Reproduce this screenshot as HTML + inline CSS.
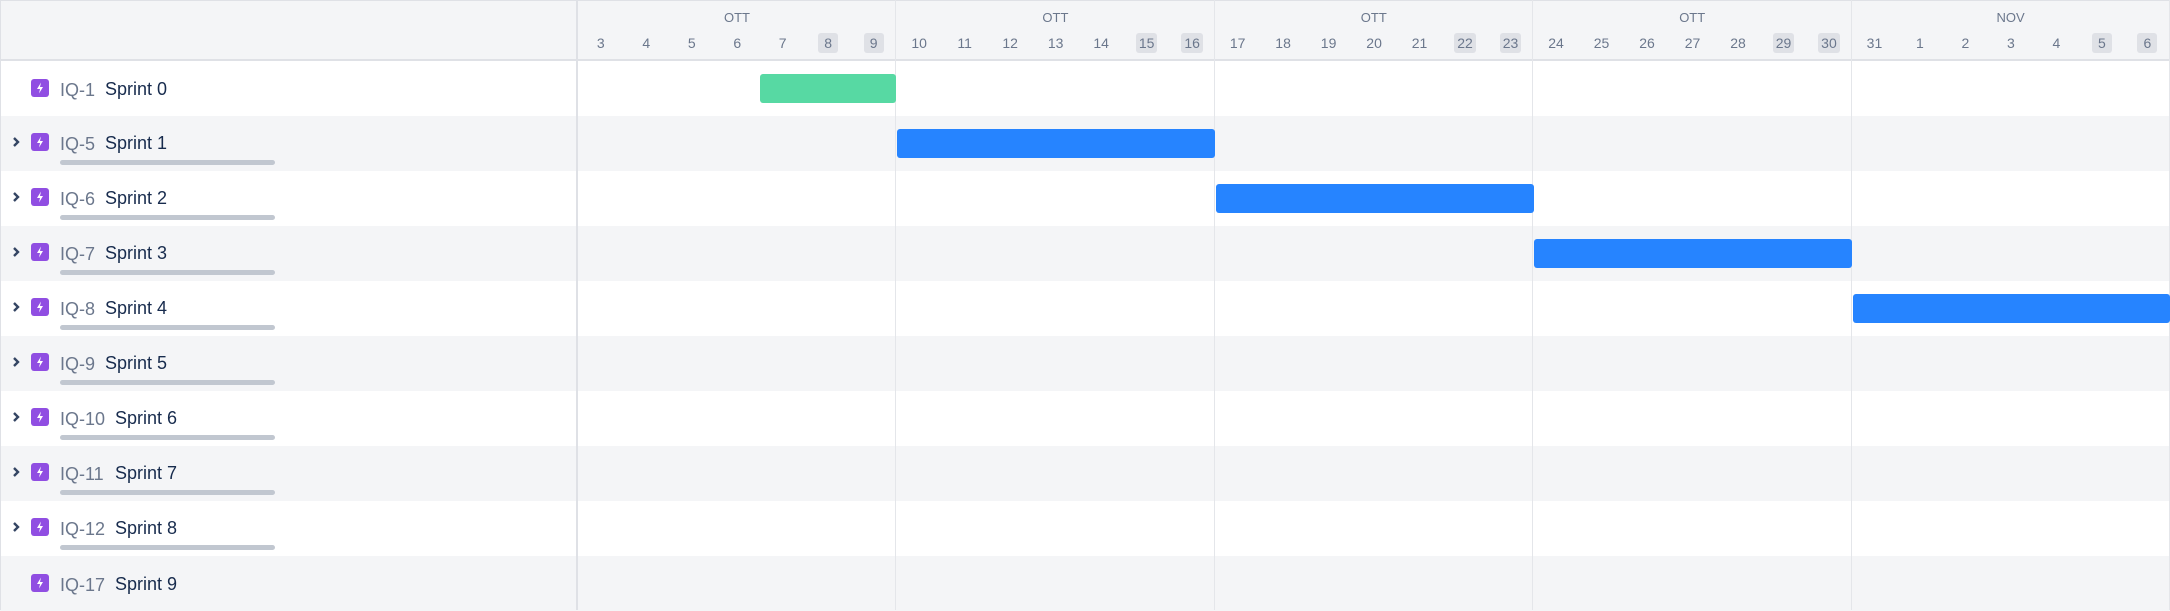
<!DOCTYPE html>
<html><head><meta charset="utf-8"><style>
*{margin:0;padding:0;box-sizing:border-box}
body{width:2170px;height:610px;overflow:hidden;background:#fff;font-family:"Liberation Sans",sans-serif;position:relative}
.abs{position:absolute}
.hdr{left:0;top:0;width:2170px;height:61px;background:#f4f5f7;border-bottom:2px solid #dfe1e6;border-top:1px solid #dfe1e6}
.row{left:0;width:2170px;height:55px}
.g{background:#f4f5f7}
.vl{top:0;width:2px;height:610px;background:#e4e6ea}
.month{top:10px;font-size:13px;color:#6b778c;width:318px;text-align:center}
.day{top:33px;width:45.5px;text-align:center;font-size:14px;color:#6b778c;line-height:20px}
.day span{display:inline-block;min-width:20px;padding:0 3px;border-radius:3px}
.day.we span{background:#dfe1e6}
.icon{left:31px;width:18px;height:18px;background:#904ee2;border-radius:3px}
.icon svg{position:absolute;left:0;top:0}
.key{left:60px;font-size:18px;color:#6b778c}
.name{font-size:18px;color:#172b4d}
.prog{left:60px;width:215px;height:5px;border-radius:3px;background:#c1c7d0}
.chev{left:11px}
.bar{height:29px;border-radius:3px}
</style></head><body>
<div class="abs hdr"></div>
<div id="rows"></div>
<div class="abs" style="left:0;top:0;width:1px;height:610px;background:#dfe1e6"></div>
<div class="abs vl" style="left:576px;width:2px;background:#dfe1e6"></div>
<div class="abs vl" style="left:895px;width:1px"></div>
<div class="abs vl" style="left:1214px;width:1px"></div>
<div class="abs vl" style="left:1532px;width:1px"></div>
<div class="abs vl" style="left:1851px;width:1px"></div>
<div class="abs vl" style="left:2169px;width:1px"></div>
<div id="hd"></div>
<div class="abs bar" style="left:760px;top:74px;width:136px;background:#57d9a3"></div>
<div class="abs bar" style="left:897px;top:129px;width:318px;background:#2684ff"></div>
<div class="abs bar" style="left:1216px;top:184px;width:318px;background:#2684ff"></div>
<div class="abs bar" style="left:1534px;top:239px;width:318px;background:#2684ff"></div>
<div class="abs bar" style="left:1853px;top:294px;width:317px;background:#2684ff"></div>
<script>
var rows=[["IQ-1","Sprint 0",0],["IQ-5","Sprint 1",1],["IQ-6","Sprint 2",1],["IQ-7","Sprint 3",1],["IQ-8","Sprint 4",1],["IQ-9","Sprint 5",1],["IQ-10","Sprint 6",1],["IQ-11","Sprint 7",1],["IQ-12","Sprint 8",1],["IQ-17","Sprint 9",0]];
var h="";
rows.forEach(function(r,i){
 var t=61+i*55;
 h+='<div class="abs row'+(i%2?' g':'')+'" style="top:'+t+'px"></div>';
 var c=t+(r[2]?26:27);
 if(r[2]) h+='<svg class="abs chev" style="top:'+(c-6)+'px" width="10" height="12" viewBox="0 0 10 12"><path d="M3 2l4 4-4 4" fill="none" stroke="#344563" stroke-width="2.4"/></svg>';
 h+='<div class="abs icon" style="top:'+(c-9)+'px"><svg width="18" height="18" viewBox="0 0 18 18"><path d="M10 3.5L6 10h3l-1 4.5 4-6.5H9z" fill="#fff"/></svg></div>';
 h+='<div class="abs key" style="top:'+(c-8)+'px">'+r[0]+'</div>';
 var nx=r[0].length>4?115:105;
 h+='<div class="abs name" style="left:'+nx+'px;top:'+(c-9)+'px">'+r[1]+'</div>';
 if(r[2]) h+='<div class="abs prog" style="top:'+(t+44)+'px"></div>';
});
document.getElementById('rows').innerHTML=h;
var days=[3,4,5,6,7,8,9,10,11,12,13,14,15,16,17,18,19,20,21,22,23,24,25,26,27,28,29,30,31,1,2,3,4,5,6];
var mon=["OTT","OTT","OTT","OTT","NOV"];var d="";
for(var k=0;k<5;k++){d+='<div class="abs month" style="left:'+(578+k*318.4)+'px">'+mon[k]+'</div>';}
days.forEach(function(v,i){var we=(i%7>=5);d+='<div class="abs day'+(we?' we':'')+'" style="left:'+(578+i*45.49)+'px"><span>'+v+'</span></div>';});
document.getElementById('hd').innerHTML=d;
</script>
</body></html>
